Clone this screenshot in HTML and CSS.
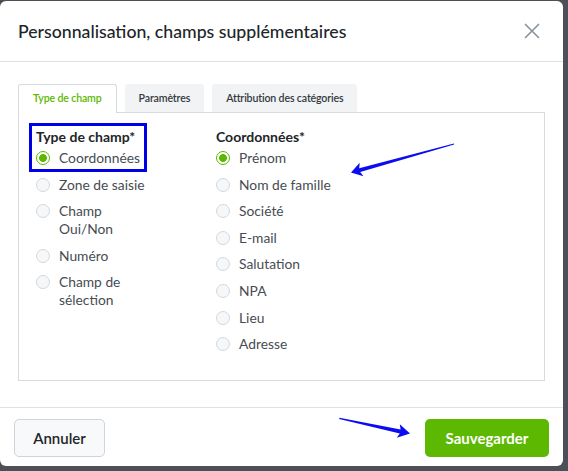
FILE: index.html
```html
<!DOCTYPE html>
<html lang="fr">
<head>
<meta charset="utf-8">
<title>Personnalisation, champs supplémentaires</title>
<link rel="stylesheet" href="styles.css">
</head>
<body>
<div class="modal">
  <div class="header">
    <h1 class="title">Personnalisation, champs supplémentaires</h1>
    <svg class="close" width="16" height="16" viewBox="0 0 16 16"><path d="M1 1 L15 15 M15 1 L1 15" stroke="#8a929b" stroke-width="1.6" fill="none"/></svg>
  </div>
  <div class="body">
    <div class="tabs">
      <div class="tab active">Type de champ</div>
      <div class="tab">Paramètres</div>
      <div class="tab">Attribution des catégories</div>
    </div>
    <div class="panel">
      <div class="col col-left">
        <div class="field-heading">Type de champ*</div>
        <div class="options">
          <div class="option"><span class="radio checked"></span><span class="label">Coordonnées</span></div>
          <div class="option"><span class="radio"></span><span class="label">Zone de saisie</span></div>
          <div class="option"><span class="radio"></span><span class="label">Champ Oui/Non</span></div>
          <div class="option"><span class="radio"></span><span class="label">Numéro</span></div>
          <div class="option"><span class="radio"></span><span class="label">Champ de sélection</span></div>
        </div>
      </div>
      <div class="col">
        <div class="field-heading">Coordonnées*</div>
        <div class="options">
          <div class="option"><span class="radio checked"></span><span class="label">Prénom</span></div>
          <div class="option"><span class="radio"></span><span class="label">Nom de famille</span></div>
          <div class="option"><span class="radio"></span><span class="label">Société</span></div>
          <div class="option"><span class="radio"></span><span class="label">E-mail</span></div>
          <div class="option"><span class="radio"></span><span class="label">Salutation</span></div>
          <div class="option"><span class="radio"></span><span class="label">NPA</span></div>
          <div class="option"><span class="radio"></span><span class="label">Lieu</span></div>
          <div class="option"><span class="radio"></span><span class="label">Adresse</span></div>
        </div>
      </div>
      <div class="highlight"></div>
    </div>
  </div>
  <div class="footer">
    <button class="btn btn-cancel">Annuler</button>
    <button class="btn btn-save">Sauvegarder</button>
  </div>
</div>
<svg class="annotations" width="568" height="471" viewBox="0 0 568 471">
  <polygon fill="#0c0cf2" points="351,172.5 359.7,162.8 359.2,168.2 453.9,143.4 454.1,144.6 360.2,172.0 363.5,176.3"/>
  <polygon fill="#0c0cf2" points="410,433.5 399.8,424.2 400.6,429.4 339.4,417.8 339.2,418.9 399.8,433.4 396.8,437.8"/>
</svg>
</body>
</html>
```
FILE: styles.css
```css
* { box-sizing: border-box; }
html, body {
  margin: 0;
  padding: 0;
}
body {
  width: 568px;
  height: 471px;
  overflow: hidden;
  background: #4b4f56;
  font-family: "Lato", "Liberation Sans", sans-serif;
  color: #212529;
  position: relative;
}
.modal {
  width: 563px;
  height: 465px;
  margin-top: 1px;
  background: #fff;
  border-radius: 6px;
  display: flex;
  flex-direction: column;
}
.header {
  height: 61px;
  border-bottom: 1px solid #dee2e6;
  display: flex;
  align-items: center;
  justify-content: space-between;
  padding: 0 23px 0 18px;
  flex: none;
}
.title {
  margin: 0;
  font-size: 17.7px;
  font-weight: 500;
  color: #212529;
}
.close { display: block; }
.body {
  flex: 1;
  padding: 22px 18px 26px 18px;
  display: flex;
  flex-direction: column;
}
.tabs {
  display: flex;
  gap: 8px;
  height: 28px;
  flex: none;
}
.tab {
  height: 28px;
  line-height: 28px;
  padding: 0 14px;
  font-size: 10.6px;
  letter-spacing: -0.15px;
  font-weight: 600;
  color: #333a40;
  background: #f1f3f5;
  border-radius: 3px 3px 0 0;
}
.tab.active {
  background: #fff;
  color: #5cb800;
  border: 1px solid #d6dbe0;
  border-bottom: none;
  height: 29px;
  line-height: 27px;
  margin-bottom: -1px;
  position: relative;
  z-index: 1;
}
.panel {
  flex: 1;
  border: 1px solid #d6dbe0;
  padding: 15px 0 0 17px;
  display: grid;
  grid-template-columns: 180px 1fr;
  align-items: start;
  position: relative;
}
.field-heading {
  font-size: 14px;
  font-weight: 700;
  line-height: 18px;
  margin-bottom: 3px;
  color: #212529;
}
.options {
  display: flex;
  flex-direction: column;
  gap: 8.6px;
}
.option {
  display: flex;
  align-items: flex-start;
  gap: 9px;
}
.label {
  font-size: 13.8px;
  line-height: 18px;
  color: #464c52;
}
.col-left .label { max-width: 90px; }
.radio {
  flex: none;
  width: 14px;
  height: 14px;
  margin-top: 2px;
  border-radius: 50%;
  border: 1px solid #d3d8dd;
  background: #f6f7f8;
}
.radio.checked {
  border: 1.5px solid #5cb800;
  background: radial-gradient(circle, #5cb800 0 3.6px, #fff 4.2px);
}
.highlight {
  position: absolute;
  left: 10px;
  top: 10px;
  width: 118px;
  height: 49px;
  border: 3px solid #0000e8;
}
.footer {
  height: 59px;
  flex: none;
  border-top: 1px solid #dee2e6;
  padding: 11px 14px 0 14px;
  display: flex;
  justify-content: space-between;
  align-items: flex-start;
}
.btn {
  height: 38px;
  border-radius: 5px;
  font-family: inherit;
  font-size: 15px;
  font-weight: 600;
  padding: 0;
}
.btn-cancel {
  width: 91px;
  background: #f8f9fa;
  border: 1px solid #ced4da;
  color: #212529;
}
.btn-save {
  width: 124px;
  background: #5cb800;
  border: none;
  color: #fff;
  font-weight: 700;
}
.annotations {
  position: absolute;
  left: 0;
  top: 0;
  pointer-events: none;
}
```
